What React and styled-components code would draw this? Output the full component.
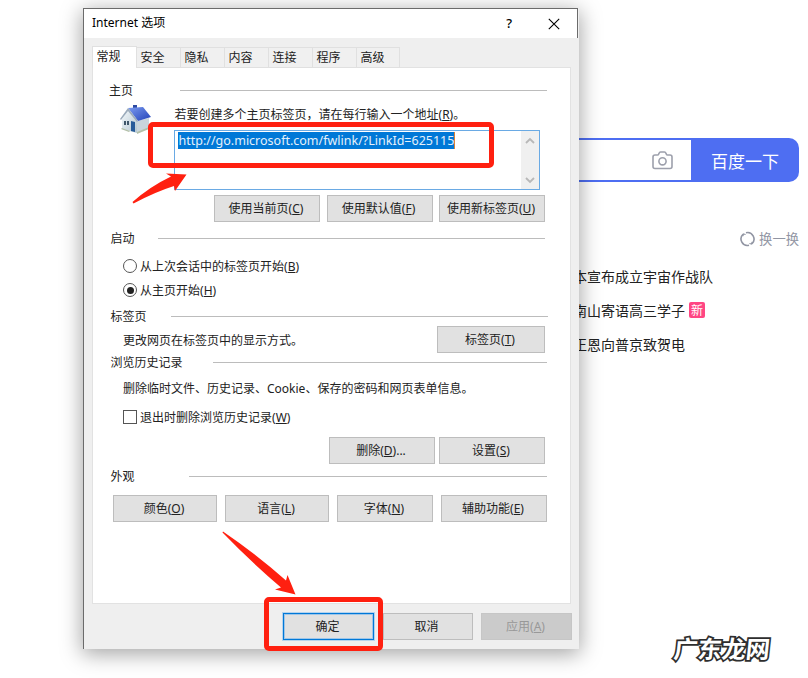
import React from "react";
import styled, { createGlobalStyle } from "styled-components";

const red = "#ff2010";
const blue = "#4e6ef2";
const uiFont = `"Noto Sans", "Noto Sans CJK SC", sans-serif`;

const GlobalStyle = createGlobalStyle`
  * {
    box-sizing: border-box;
  }

  body {
    margin: 0;
    background: #fff;
  }
`;

const Page = styled.div`
  position: relative;
  width: 808px;
  height: 678px;
  overflow: hidden;
  background: #fff;
  font-family: ${uiFont};
`;

/* search page behind the dialog */

const SearchPage = styled.main`
  display: flex;
  flex-direction: column;
  width: 799px;
  padding-top: 138px;
`;

const SearchBar = styled.div`
  display: flex;
  height: 44px;
  margin-left: 300px;
`;

const SearchField = styled.div`
  display: flex;
  flex: 1;
  align-items: center;
  justify-content: flex-end;
  padding-right: 18px;
  border: 2px solid ${blue};
  border-right: none;
`;

const SearchButton = styled.div`
  width: 108px;
  border-radius: 0 10px 10px 0;
  background: ${blue};
  color: #fff;
  font: 17px/45px "Noto Sans CJK SC", sans-serif;
  text-align: center;
`;

const Refresh = styled.div`
  display: flex;
  align-items: center;
  align-self: flex-end;
  gap: 4px;
  height: 20px;
  margin-top: 47px;
  color: #9195a3;
  font: 13.3px/20px "Noto Sans CJK SC", sans-serif;
`;

const NewsList = styled.div`
  display: flex;
  flex-direction: column;
  margin: 10px 0 0 573px;
`;

const NewsItem = styled.div`
  display: flex;
  align-items: center;
  gap: 4px;
  height: 34px;
  color: #222;
  font: 14px/34px "Noto Sans CJK SC", sans-serif;
  white-space: nowrap;
`;

const Badge = styled.span`
  width: 16px;
  height: 16px;
  border-radius: 2px;
  background: #ff4683;
  color: #fff;
  font-size: 12px;
  line-height: 16px;
  text-align: center;
`;

/* dialog */

const Dialog = styled.section`
  position: absolute;
  top: 8px;
  left: 83px;
  display: flex;
  flex-direction: column;
  width: 496px;
  height: 641px;
  border-left: 1px solid #6b6b6b;
  background: #efefef;
  box-shadow: 0 4px 20px 1px rgba(0, 0, 0, 0.36);
  color: #222;
  font-size: 12px;
`;

const TitleBar = styled.header`
  display: flex;
  align-items: center;
  width: 494px;
  height: 30px;
  padding: 0 17px 0 8px;
  border-top: 1px solid #6b6b6b;
  border-right: 1px solid #6b6b6b;
  background: #fff;
  color: #000;
`;

const Title = styled.span`
  flex: 1;
  padding-bottom: 3px;
`;

const Help = styled.span`
  margin-right: 36px;
  padding-bottom: 2px;
  font-size: 13px;
  font-weight: 500;
`;

const Tabs = styled.nav`
  display: flex;
  align-items: flex-end;
  height: 22px;
  margin: 8px 0 -1px 8px;
`;

const Tab = styled.div`
  position: relative;
  width: 44px;
  height: 21px;
  padding-left: 3.5px;
  border: 1px solid #e0e0e0;
  border-left: none;
  background: #f0f0f0;
  line-height: 20px;

  &:last-child {
    width: 43px;
  }
`;

const ActiveTab = styled(Tab)`
  width: 45px;
  height: 22px;
  border-left: 1px solid #e0e0e0;
  border-bottom: none;
  background: #fff;
  z-index: 1;
`;

const Panel = styled.div`
  display: flex;
  flex-direction: column;
  width: 479px;
  height: 537px;
  margin-left: 8px;
  border: 1px solid #e2e2e2;
  background: #fff;
`;

const GroupTitle = styled.div`
  display: flex;
  height: 16px;
  margin: ${({ $top }) => $top}px 0 0 ${({ $left = 17.5 }) => $left}px;
  line-height: 18px;

  &::after {
    content: "";
    width: ${({ $line }) => $line}px;
    height: 1px;
    margin: 8px ${({ $end = 23 }) => $end}px 0 auto;
    background: #bcbcbc;
  }
`;

const Row = styled.div`
  display: flex;
  align-items: center;
  gap: ${({ $gap = 3 }) => $gap}px;
  min-height: 20px;
  margin: ${({ $top = 0 }) => $top}px 0 0 ${({ $left = 30 }) => $left}px;
  line-height: 18px;
  white-space: nowrap;
`;

const Label = styled.span`
  padding-top: 2px;
`;

const Button = styled.div`
  width: ${({ $width = 106 }) => $width}px;
  height: 27px;
  padding-right: 2px;
  border: 1px solid #bdbdbd;
  background: #e1e1e1;
  line-height: 26px;
  text-align: center;
  white-space: nowrap;
`;

const TabsButton = styled(Button)`
  margin: 0 25px 0 auto;
`;

const PrimaryButton = styled(Button)`
  border-color: #0078d7;
  box-shadow: 0 0 0 1px #b5d3ee, inset 0 0 0 1px #9fc6e8;
`;

const DisabledButton = styled(Button)`
  border-color: #c6c6c6;
  background: #cbcbcb;
  color: #989898;
`;

const HomeBlock = styled.div`
  display: flex;
  margin: 6px 0 0 26px;
`;

const HomeFields = styled.div`
  width: 366px;
  margin-left: 21px;
`;

const UrlBox = styled.div`
  display: flex;
  justify-content: space-between;
  align-items: stretch;
  height: 60px;
  margin-top: 6px;
  border: 1px solid #6aaae4;
  background: #fff;
`;

const SelectedUrl = styled.span`
  width: 277px;
  height: 17px;
  margin: 1px 0 0 3px;
  padding-left: 0.5px;
  border-right: 1px solid #d98237;
  background: #0078d7;
  color: #e5f1fb;
  font-size: 12.5px;
  line-height: 17px;
  white-space: nowrap;
`;

const ScrollBar = styled.div`
  display: flex;
  flex-direction: column;
  align-items: center;
  justify-content: space-between;
  width: 18px;
  padding: 6px 0 5px;
  background: #f0f0f0;
`;

const Radio = styled.span`
  display: flex;
  align-items: center;
  justify-content: center;
  width: 14px;
  height: 14px;
  border: 1px solid #555;
  border-radius: 50%;

  &::after {
    content: "";
    width: 7px;
    height: 7px;
    border-radius: 50%;
    background: ${({ $checked }) => ($checked ? "#222" : "transparent")};
  }
`;

const CheckBox = styled.span`
  width: 14px;
  height: 14px;
  border: 1px solid #555;
`;

const Footer = styled.footer`
  display: flex;
  gap: 8.5px;
  margin: 9px 0 0 199px;
`;

/* annotations drawn over the dialog */

const Marker = styled.div`
  position: absolute;
  top: ${({ $y }) => $y}px;
  left: ${({ $x }) => $x}px;
  width: ${({ $w }) => $w}px;
  height: ${({ $h }) => $h}px;
  border: 5px solid ${red};
  border-radius: 5px;
`;

const Arrows = styled.svg`
  position: absolute;
  top: 0;
  left: 0;
  fill: ${red};
`;

const Watermark = styled.div`
  position: absolute;
  top: 631px;
  left: 674px;
  color: #fff;
  font: 700 24px/34px "Noto Sans CJK SC", sans-serif;
  -webkit-text-stroke: 3.5px #2e2e2e;
  paint-order: stroke fill;
  transform: skewX(-6deg);
  white-space: nowrap;
`;

const Key = ({ children }) => (
  <>
    (<u>{children}</u>)
  </>
);

const Camera = () => (
  <svg width="21" height="19" viewBox="0 0 21 19" fill="none" stroke="#9da0ac" strokeWidth="1.6">
    <path d="M3 4h2.5q.8 0 1.1-.8l.5-1.1Q7.5 1 8.5 1h4q1 0 1.4 1.1l.5 1.1q.3.8 1.1.8H18q2 0 2 2v9.5q0 2-2 2H3q-2 0-2-2V6q0-2 2-2z" />
    <circle cx="10.5" cy="10.3" r="3.6" />
  </svg>
);

const RefreshIcon = () => (
  <svg width="15" height="16" viewBox="0 0 15 16" fill="none" stroke="#9195a3" strokeWidth="1.6">
    <path d="M9 14.2A6.400 6.400 0 0 1 3 3.400" />
    <path d="M6 1.800A6.400 6.400 0 0 1 12 12.600" />
    <path d="m2.800 5.200.6-2.200 2.200.5M12.200 10.800l-.6 2.200-2.200-.5" strokeWidth="1.2" />
  </svg>
);

const House = () => (
  <svg width="34" height="32" viewBox="0 0 34 32">
    <defs>
      <linearGradient id="roof" x1="0" y1="0" x2="1" y2="1">
        <stop offset="0" stopColor="#7d9cf0" />
        <stop offset="1" stopColor="#2040b8" />
      </linearGradient>
      <linearGradient id="wall" x1="0" y1="0" x2="1" y2="1">
        <stop offset="0" stopColor="#f3f8fb" />
        <stop offset="1" stopColor="#b4c6d0" />
      </linearGradient>
    </defs>
    <path d="M3 15 9 6l9 10v13L3 25z" fill="url(#wall)" />
    <path d="m18 17 12-3v10l-12 5z" fill="#c9d5dc" />
    <path d="M14 1h4v6h-4z" fill="#2c49a3" />
    <path d="M9 4 24 3l8 10-13 4z" fill="url(#roof)" />
    <path d="m9 4-8 11 1 1 7-9 9 11 1-1z" fill="#9babbb" />
    <path d="M5 17h5v4H5z" fill="#40576a" />
    <path d="M7.500 17v4" stroke="#d7e3ea" />
    <path d="m12 17 4 1v10l-4-1z" fill="#275b99" />
    <path d="m3 24 8 3-1 1-8-3zM18 28l12-5v2l-12 5z" fill="#b3c0a8" />
  </svg>
);

const Chevron = ({ down }) => (
  <svg width="10" height="7" viewBox="0 0 10 7" fill="none" stroke="#b8b8b8" strokeWidth="1.8">
    <path d={down ? "m1 1 4 4 4-4" : "m1 6 4-4 4 4"} />
  </svg>
);

const tabs = ["安全", "隐私", "内容", "连接", "程序", "高级"];

const news = [
  { title: "本宣布成立宇宙作战队" },
  { title: "南山寄语高三学子", isNew: true },
  { title: "正恩向普京致贺电" },
];

const Background = () => (
  <SearchPage>
    <SearchBar>
      <SearchField>
        <Camera />
      </SearchField>
      <SearchButton>百度一下</SearchButton>
    </SearchBar>
    <Refresh>
      <RefreshIcon />
      换一换
    </Refresh>
    <NewsList>
      {news.map(({ title, isNew }) => (
        <NewsItem key={title}>
          {title}
          {isNew && <Badge>新</Badge>}
        </NewsItem>
      ))}
    </NewsList>
  </SearchPage>
);

const InternetOptions = () => (
  <Dialog>
    <TitleBar>
      <Title>Internet 选项</Title>
      <Help>?</Help>
      <svg width="12" height="12" viewBox="0 0 12 12" stroke="#000" strokeWidth="1.1">
        <path d="m.8.8 10.4 10.4M11.2.8.8 11.2" />
      </svg>
    </TitleBar>
    <Tabs>
      <ActiveTab>常规</ActiveTab>
      {tabs.map(tab => (
        <Tab key={tab}>{tab}</Tab>
      ))}
    </Tabs>
    <Panel>
      <GroupTitle $top={14} $left={16} $line={367}>主页</GroupTitle>
      <HomeBlock>
        <House />
        <HomeFields>
          <Row $left={0.5}>
            <Label>若要创建多个主页标签页，请在每行输入一个地址<Key>R</Key>。</Label>
          </Row>
          <UrlBox>
            <SelectedUrl>http://go.microsoft.com/fwlink/?LinkId=625115</SelectedUrl>
            <ScrollBar>
              <Chevron />
              <Chevron down />
            </ScrollBar>
          </UrlBox>
        </HomeFields>
      </HomeBlock>
      <Row $top={5} $left={121} $gap={6.5}>
        <Button>使用当前页<Key>C</Key></Button>
        <Button>使用默认值<Key>F</Key></Button>
        <Button>使用新标签页<Key>U</Key></Button>
      </Row>
      <GroupTitle $top={8} $line={387} $end={25}>启动</GroupTitle>
      <Row $top={10}>
        <Radio />
        <Label>从上次会话中的标签页开始<Key>B</Key></Label>
      </Row>
      <Row $top={4}>
        <Radio $checked />
        <Label>从主页开始<Key>H</Key></Label>
      </Row>
      <GroupTitle $top={8} $line={377} $end={22}>标签页</GroupTitle>
      <Row $top={2}>
        <Label>更改网页在标签页中的显示方式。</Label>
        <TabsButton $width={108}>标签页<Key>T</Key></TabsButton>
      </Row>
      <GroupTitle $top={1} $line={334}>浏览历史记录</GroupTitle>
      <Row $top={8}>
        <Label>删除临时文件、历史记录、Cookie、保存的密码和网页表单信息。</Label>
      </Row>
      <Row $top={9}>
        <CheckBox />
        <Label>退出时删除浏览历史记录<Key>W</Key></Label>
      </Row>
      <Row $top={10} $left={236} $gap={4}>
        <Button>删除<Key>D</Key>...</Button>
        <Button>设置<Key>S</Key></Button>
      </Row>
      <GroupTitle $top={4} $line={358}>外观</GroupTitle>
      <Row $top={11} $left={20} $gap={8}>
        <Button $width={104}>颜色<Key>O</Key></Button>
        <Button $width={104}>语言<Key>L</Key></Button>
        <Button $width={96}>字体<Key>N</Key></Button>
        <Button>辅助功能<Key>E</Key></Button>
      </Row>
    </Panel>
    <Footer>
      <PrimaryButton $width={91}>确定</PrimaryButton>
      <Button $width={90}>取消</Button>
      <DisabledButton $width={91}>应用<Key>A</Key></DisabledButton>
    </Footer>
  </Dialog>
);

const App = () => (
  <Page>
    <GlobalStyle />
    <Background />
    <InternetOptions />
    <Marker $x={148} $y={122} $w={346} $h={46} />
    <Marker $x={264} $y={597} $w={119} $h={54} />
    <Arrows width="808" height="678">
      <path d="M132.5 202Q150 186.5 171 176.5L166 173.5 186.5 174.5 175 191 174 186Q155 192 133.5 203.5z" />
      <path d="M223 531.5Q256 554 286 580.5L287.5 575 295.5 594.5 275 589.5 281 587.5Q250 561 222.5 532.5z" />
    </Arrows>
    <Watermark>广东龙网</Watermark>
  </Page>
);

export default App;
